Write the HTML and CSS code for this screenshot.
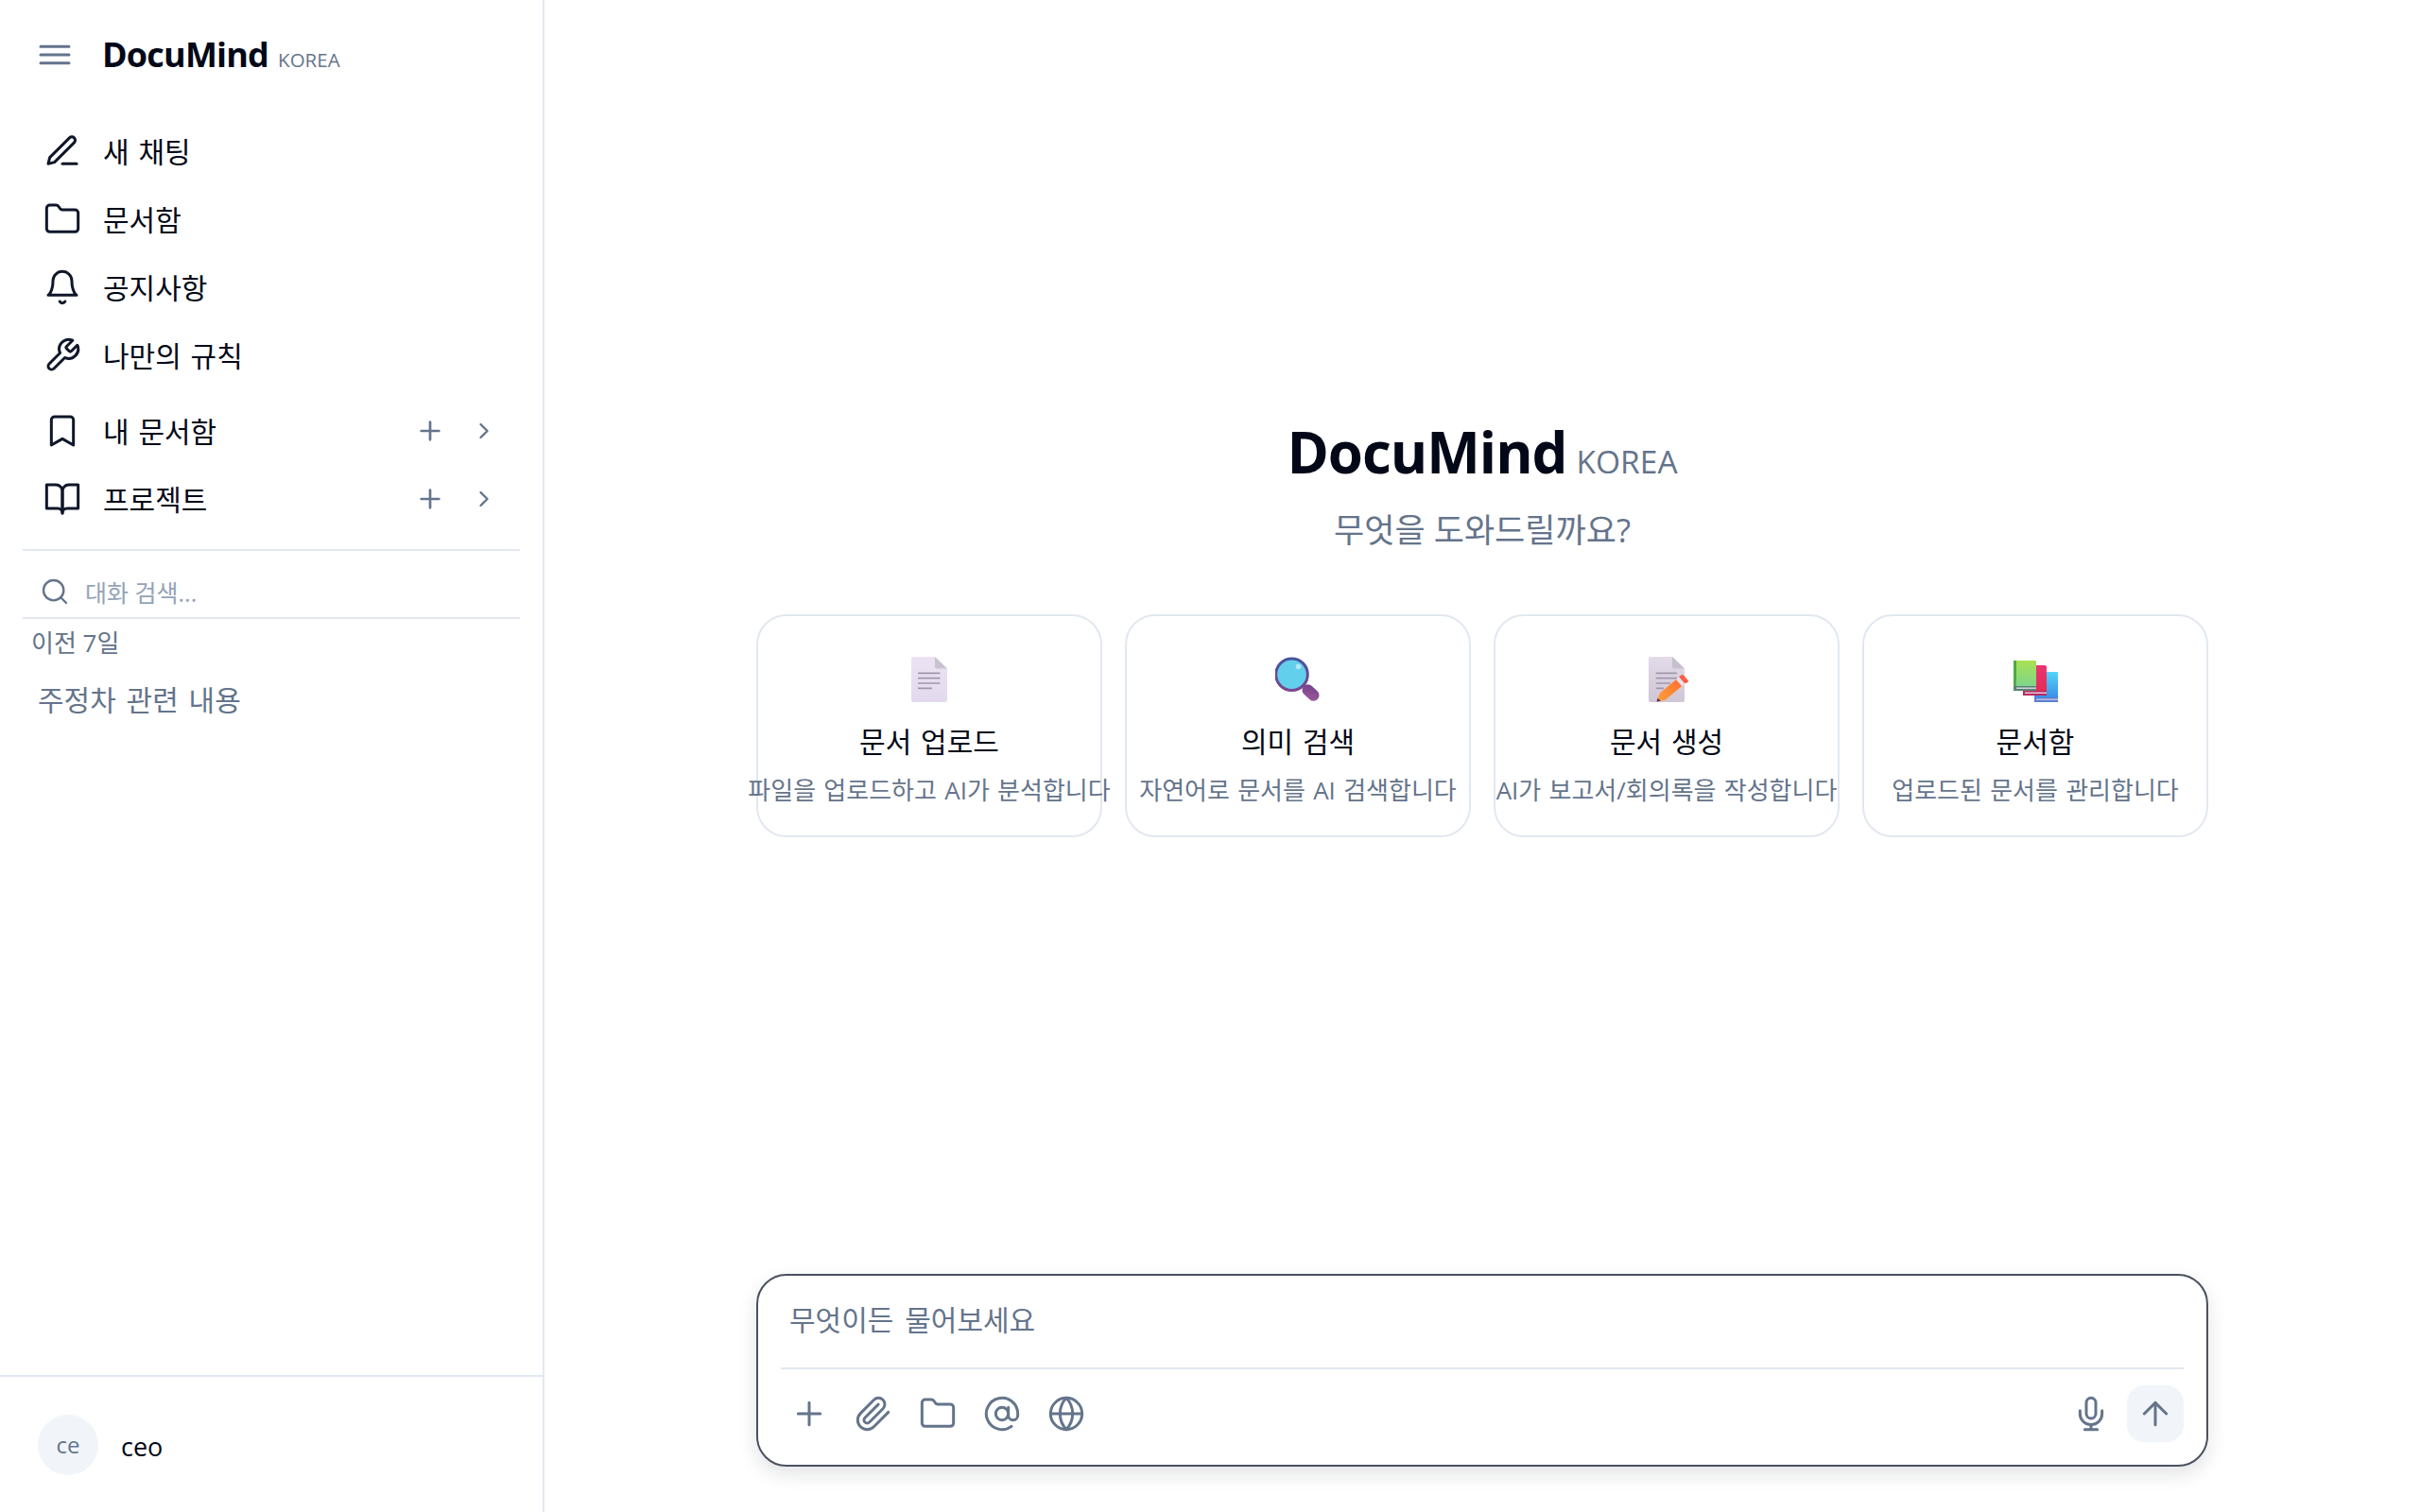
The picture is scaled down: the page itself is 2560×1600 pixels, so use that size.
FILE: index.html
```html
<!DOCTYPE html>
<html lang="ko">
<head>
<meta charset="utf-8">
<title>DocuMind KOREA</title>
<link rel="stylesheet" href="styles.css">
</head>
<body>
<div class="app">
  <aside class="sidebar">
    <header class="brand-row">
      <svg class="ic ic-muted" viewBox="0 0 24 24"><path d="M3 6.750h18M3 12h18M3 17.250h18"/></svg>
      <div class="brand"><span class="brand-name">DocuMind</span><span class="brand-tag">KOREA</span></div>
    </header>
    <nav class="nav">
      <a class="nav-item"><svg class="ic" viewBox="0 0 24 24"><path d="M12 20h9"/><path d="M16.500 3.500a2.120 2.120 0 0 1 3 3L7 19l-4 1 1-4Z"/></svg><span class="label">새 채팅</span></a>
      <a class="nav-item"><svg class="ic" viewBox="0 0 24 24"><path d="M20 20a2 2 0 0 0 2-2V8a2 2 0 0 0-2-2h-7.900a2 2 0 0 1-1.690-.9L9.600 3.900A2 2 0 0 0 7.930 3H4a2 2 0 0 0-2 2v13a2 2 0 0 0 2 2Z"/></svg><span class="label">문서함</span></a>
      <a class="nav-item"><svg class="ic" viewBox="0 0 24 24"><path d="M6 8a6 6 0 0 1 12 0c0 7 3 9 3 9H3s3-2 3-9"/><path d="M10.300 21a1.940 1.940 0 0 0 3.400 0"/></svg><span class="label">공지사항</span></a>
      <a class="nav-item"><svg class="ic" viewBox="0 0 24 24"><path d="M14.700 6.300a1 1 0 0 0 0 1.400l1.600 1.600a1 1 0 0 0 1.400 0l3.770-3.770a6 6 0 0 1-7.940 7.940l-6.910 6.910a2.120 2.120 0 0 1-3-3l6.910-6.910a6 6 0 0 1 7.940-7.940l-3.760 3.760z"/></svg><span class="label">나만의 규칙</span></a>
    </nav>
    <div class="nav nav-sections">
      <div class="nav-item">
        <svg class="ic" viewBox="0 0 24 24"><path d="m19 21-7-4-7 4V5a2 2 0 0 1 2-2h10a2 2 0 0 1 2 2v16z"/></svg><span class="label grow">내 문서함</span>
        <svg class="ic-plus ic-muted" viewBox="0 0 24 24"><path d="M5 12h14M12 5v14"/></svg>
        <svg class="ic-chev ic-muted" viewBox="0 0 24 24"><path d="m9 18 6-6-6-6"/></svg>
      </div>
      <div class="nav-item">
        <svg class="ic" viewBox="0 0 24 24"><path d="M2 3h6a4 4 0 0 1 4 4v14a3 3 0 0 0-3-3H2z"/><path d="M22 3h-6a4 4 0 0 0-4 4v14a3 3 0 0 1 3-3h7z"/></svg><span class="label grow">프로젝트</span>
        <svg class="ic-plus ic-muted" viewBox="0 0 24 24"><path d="M5 12h14M12 5v14"/></svg>
        <svg class="ic-chev ic-muted" viewBox="0 0 24 24"><path d="m9 18 6-6-6-6"/></svg>
      </div>
    </div>
    <div class="search">
      <svg class="ic-search ic-muted" viewBox="0 0 24 24"><circle cx="11" cy="11" r="8"/><path d="m21 21-4.300-4.300"/></svg>
      <span>대화 검색...</span>
    </div>
    <div class="history">
      <div class="history-label">이전 7일</div>
      <div class="history-item">주정차 관련 내용</div>
    </div>
    <footer class="user">
      <div class="avatar">ce</div>
      <span class="user-name">ceo</span>
    </footer>
  </aside>

  <main class="main">
    <section class="welcome">
      <h1 class="hero"><span class="hero-name">DocuMind</span><span class="hero-tag">KOREA</span></h1>
      <p class="subtitle">무엇을 도와드릴까요?</p>
      <div class="cards">
        <article class="card">
          <svg class="emoji" viewBox="0 0 48 48">
            <defs><linearGradient id="pg" x1="0" y1="0" x2="0" y2="1"><stop offset="0" stop-color="#ebe3f3"/><stop offset="1" stop-color="#e3d9ee"/></linearGradient></defs>
            <path d="M7 0a2 2 0 0 0-2 2v44a2 2 0 0 0 2 2h34a2 2 0 0 0 2-2V12.500L30 0z" fill="url(#pg)"/>
            <path d="M30 0v10.500a2 2 0 0 0 2 2h11z" fill="#c9c3d0"/>
            <path d="M12 17.300h23.500M12 22.700h23.500M12 28h23.500M12 33.300h15" stroke="#a297ac" stroke-width="1.700"/>
          </svg>
          <h2 class="card-title">문서 업로드</h2>
          <p class="card-desc">파일을 업로드하고 AI가 분석합니다</p>
        </article>
        <article class="card">
          <svg class="emoji" viewBox="0 0 48 48">
            <defs>
              <linearGradient id="rim" x1="0" y1="0" x2="0" y2="1"><stop offset="0" stop-color="#46549c"/><stop offset="1" stop-color="#7b4590"/></linearGradient>
              <linearGradient id="hd" x1="0" y1="0" x2="1" y2="1"><stop offset="0" stop-color="#6f3f85"/><stop offset="1" stop-color="#a05ca0"/></linearGradient>
            </defs>
            <rect x="27.500" y="32" width="20" height="12" rx="6" transform="rotate(42 37.500 38)" fill="url(#hd)"/>
            <circle cx="17.500" cy="18.700" r="16.800" fill="#62cfec" stroke="url(#rim)" stroke-width="3"/>
            <circle cx="24.500" cy="10.500" r="2.800" fill="#b9e6f6"/>
          </svg>
          <h2 class="card-title">의미 검색</h2>
          <p class="card-desc">자연어로 문서를 AI 검색합니다</p>
        </article>
        <article class="card">
          <svg class="emoji" viewBox="0 0 48 48">
            <defs>
              <linearGradient id="pm" x1="0" y1="0" x2="0" y2="1"><stop offset="0" stop-color="#e2dbe8"/><stop offset="1" stop-color="#d0c6d6"/></linearGradient>
              <linearGradient id="pen" x1="0" y1="1" x2="1" y2="0"><stop offset="0" stop-color="#ffa13a"/><stop offset="1" stop-color="#ff6d2e"/></linearGradient>
            </defs>
            <path d="M7 0a2 2 0 0 0-2 2v44a2 2 0 0 0 2 2h34a2 2 0 0 0 2-2V12.500L30 0z" fill="url(#pm)"/>
            <path d="M30 0v10.500a2 2 0 0 0 2 2h11z" fill="#c6bfcc"/>
            <path d="M12.700 17.300H35M12.700 22.700H35M12.700 28H28M12.700 33.300H21" stroke="#a297ac" stroke-width="1.700"/>
            <path d="M34.200 23.900L40.200 30.900 22.700 45.800 13.600 47.500 16.700 38.800z" fill="url(#pen)"/>
            <path d="M37.200 21.300L43.200 28.300 40.200 30.900 34.200 23.900z" fill="#ece1ea"/>
            <path d="M39.500 19.300a2 2 0 0 1 2.500.200l4.500 5.200a2 2 0 0 1-.2 2.500L43.200 28.300 37.200 21.300z" fill="#ff5d47"/>
            <path d="M13.600 47.500l.8-3.800 3.400 3z" fill="#5c2a5e"/>
          </svg>
          <h2 class="card-title">문서 생성</h2>
          <p class="card-desc">AI가 보고서/회의록을 작성합니다</p>
        </article>
        <article class="card">
          <svg class="emoji" viewBox="0 0 48 48">
            <defs>
              <linearGradient id="bg" x1="0" y1="0" x2="0" y2="1"><stop offset="0" stop-color="#a9e152"/><stop offset="1" stop-color="#7ed58c"/></linearGradient>
              <linearGradient id="br" x1="0" y1="0" x2="0" y2="1"><stop offset="0" stop-color="#ea3573"/><stop offset="1" stop-color="#e52b55"/></linearGradient>
              <linearGradient id="bb" x1="0" y1="0" x2="0" y2="1"><stop offset="0" stop-color="#56d5f7"/><stop offset="1" stop-color="#3a8fe8"/></linearGradient>
            </defs>
            <path d="M23 16h24a1 1 0 0 1 1 1v26H23z" fill="url(#bb)"/>
            <path d="M23 43h25v5H23z" fill="#5b7fd1"/><path d="M25 44.500h23v1.300H25z" fill="#d5c8e2"/>
            <path d="M11 9h23a2 2 0 0 1 2 2v25H11z" fill="url(#br)"/>
            <path d="M11 36h25v5H11z" fill="#b72a5e"/><path d="M13 37.500h23v1.500H13z" fill="#e7c6da"/>
            <path d="M1 4h23a1 1 0 0 1 1 1v26H1z" fill="url(#bg)"/>
            <path d="M1 4h3v27H1z" fill="#4fa946"/>
            <path d="M1 31h24v5H1z" fill="#56866f"/><path d="M4 32.500h21V34H4z" fill="#d8cbe0"/>
          </svg>
          <h2 class="card-title">문서함</h2>
          <p class="card-desc">업로드된 문서를 관리합니다</p>
        </article>
      </div>
    </section>

    <section class="composer">
      <div class="composer-input">무엇이든 물어보세요</div>
      <div class="composer-bar">
        <div class="tools">
          <svg class="ic ic-muted" viewBox="0 0 24 24"><path d="M5 12h14M12 5v14"/></svg>
          <svg class="ic ic-muted" viewBox="0 0 24 24"><path d="m21.440 11.050-9.190 9.190a6 6 0 0 1-8.490-8.490l8.570-8.570A4 4 0 1 1 18 8.840l-8.590 8.570a2 2 0 0 1-2.830-2.830l8.490-8.480"/></svg>
          <svg class="ic ic-muted" viewBox="0 0 24 24"><path d="M20 20a2 2 0 0 0 2-2V8a2 2 0 0 0-2-2h-7.900a2 2 0 0 1-1.690-.9L9.600 3.900A2 2 0 0 0 7.930 3H4a2 2 0 0 0-2 2v13a2 2 0 0 0 2 2Z"/></svg>
          <svg class="ic ic-muted" viewBox="0 0 24 24"><circle cx="12" cy="12" r="4"/><path d="M16 8v5a3 3 0 0 0 6 0v-1a10 10 0 1 0-4 8"/></svg>
          <svg class="ic ic-muted" viewBox="0 0 24 24"><circle cx="12" cy="12" r="10"/><path d="M12 2a14.500 14.500 0 0 0 0 20 14.500 14.500 0 0 0 0-20"/><path d="M2 12h20"/></svg>
        </div>
        <div class="actions">
          <svg class="ic ic-muted" viewBox="0 0 24 24"><path d="M12 2a3 3 0 0 0-3 3v7a3 3 0 0 0 6 0V5a3 3 0 0 0-3-3Z"/><path d="M19 10v2a7 7 0 0 1-14 0v-2"/><path d="M12 19v3M8 22h8"/></svg>
          <button class="send" type="button"><svg class="ic ic-muted" viewBox="0 0 24 24"><path d="m5 12 7-7 7 7"/><path d="M12 19V5"/></svg></button>
        </div>
      </div>
    </section>
  </main>
</div>
</body>
</html>
```

FILE: styles.css
```css
* { box-sizing: border-box; margin: 0; padding: 0; }
html, body { height: 100%; }
body {
  background: #fff;
  color: #020817;
  font-family: "Open Sans", "Noto Sans CJK KR", sans-serif;
  overflow: hidden;
}
.app { display: flex; height: 1600px; }

.ic, .ic-plus, .ic-chev, .ic-search {
  fill: none;
  stroke: #0f172a;
  stroke-width: 1.8;
  stroke-linecap: round;
  stroke-linejoin: round;
  flex: none;
}
.ic { width: 40px; height: 40px; }
.ic-plus { width: 32px; height: 32px; stroke-width: 2; }
.ic-chev { width: 28px; height: 28px; margin-left: 4px; stroke-width: 2; }
.ic-search { width: 32px; height: 32px; }
.ic.ic-muted, .ic-plus.ic-muted, .ic-chev.ic-muted, .ic-search.ic-muted { stroke: #64748b; }

/* Sidebar */
.sidebar {
  width: 576px;
  flex: none;
  border-right: 2px solid #e2e8f0;
  display: flex;
  flex-direction: column;
}
.brand-row {
  height: 116px;
  padding: 0 0 0 38px;
  display: flex;
  align-items: center;
  gap: 30px;
}
.brand { display: flex; align-items: baseline; gap: 10px; }
.brand-name { font-size: 36px; font-weight: 700; line-height: 1; letter-spacing: -0.8px; }
.brand-tag { font-size: 20.500px; color: #64748b; line-height: 1; }
.nav { padding-top: 8px; display: flex; flex-direction: column; }
.nav-item {
  height: 72px;
  padding: 0 48px 0 46px;
  display: flex;
  align-items: center;
  gap: 23px;
  font-size: 30px;
  word-spacing: 2px;
  color: #020817;
}
.label { padding-bottom: 3px; }
.grow { flex: 1; }
.nav-sections {
  padding-top: 8px;
  padding-bottom: 17px;
  margin: 0 24px;
  border-bottom: 2px solid #e2e8f0;
}
.nav-sections .nav-item { padding: 0 24px 0 22px; }
.search {
  height: 72px;
  margin: 0 24px;
  padding: 16px 0 0 18px;
  border-bottom: 2px solid #e2e8f0;
  display: flex;
  align-items: center;
  gap: 16px;
  font-size: 25px;
  color: #94a3b8;
}
.history { flex: 1; }
.history-label { padding: 8px 0 0 33px; font-size: 26px; line-height: 34px; color: #64748b; }
.history-item { padding: 22px 0 0 40px; font-size: 30px; word-spacing: 3px; line-height: 44px; color: #64748b; }
.user {
  height: 145px;
  border-top: 2px solid #e2e8f0;
  padding-left: 40px;
  display: flex;
  align-items: center;
  gap: 24px;
}
.avatar {
  width: 64px;
  height: 64px;
  border-radius: 50%;
  background: #f1f5f9;
  color: #64748b;
  font-size: 24px;
  display: flex;
  align-items: center;
  justify-content: center;
}
.user-name { font-size: 27px; padding-top: 4px; }

/* Main */
.main {
  flex: 1;
  display: flex;
  flex-direction: column;
  align-items: center;
}
.welcome {
  flex: 1;
  width: 1536px;
  padding-top: 436px;
  display: flex;
  flex-direction: column;
  align-items: center;
}
.hero { display: flex; align-items: baseline; gap: 10px; font-weight: 700; line-height: 84px; }
.hero-name { font-size: 60px; letter-spacing: -1px; }
.hero-tag { font-size: 33.500px; font-weight: 400; color: #64748b; }
.subtitle { margin-top: 7px; font-size: 35px; line-height: 48px; color: #64748b; }
.cards {
  margin-top: 65px;
  display: grid;
  grid-template-columns: repeat(4, 366px);
  gap: 24px;
}
.card {
  height: 236px;
  border: 2px solid #e2e8f0;
  border-radius: 32px;
  padding-top: 43px;
  display: flex;
  flex-direction: column;
  align-items: center;
}
.emoji { width: 48px; height: 48px; flex: none; }
.card-title { margin-top: 20px; font-size: 30px; word-spacing: 2px; line-height: 44px; font-weight: 400; white-space: nowrap; }
.card-desc { margin-top: 7px; font-size: 26px; word-spacing: 1.500px; line-height: 44px; color: #64748b; white-space: nowrap; }

.composer {
  width: 1536px;
  height: 204px;
  margin-bottom: 48px;
  border: 2px solid #4b5160;
  border-radius: 32px;
  box-shadow: 0 8px 20px rgba(15, 23, 42, 0.12);
  background: #fff;
  padding: 0 24px;
  display: flex;
  flex-direction: column;
}
.composer-input {
  height: 99px;
  padding: 25px 9px 0;
  font-size: 30px;
  word-spacing: 4px;
  line-height: 44px;
  color: #64748b;
  border-bottom: 2px solid #e2e8f0;
}
.composer-bar {
  flex: 1;
  display: flex;
  align-items: center;
  justify-content: space-between;
  padding-bottom: 8px;
}
.tools { display: flex; gap: 28px; padding-left: 10px; }
.actions { display: flex; align-items: center; gap: 18px; }
.send {
  width: 60px;
  height: 60px;
  border: none;
  border-radius: 18px;
  background: #f1f5f9;
  display: flex;
  align-items: center;
  justify-content: center;
}
```
